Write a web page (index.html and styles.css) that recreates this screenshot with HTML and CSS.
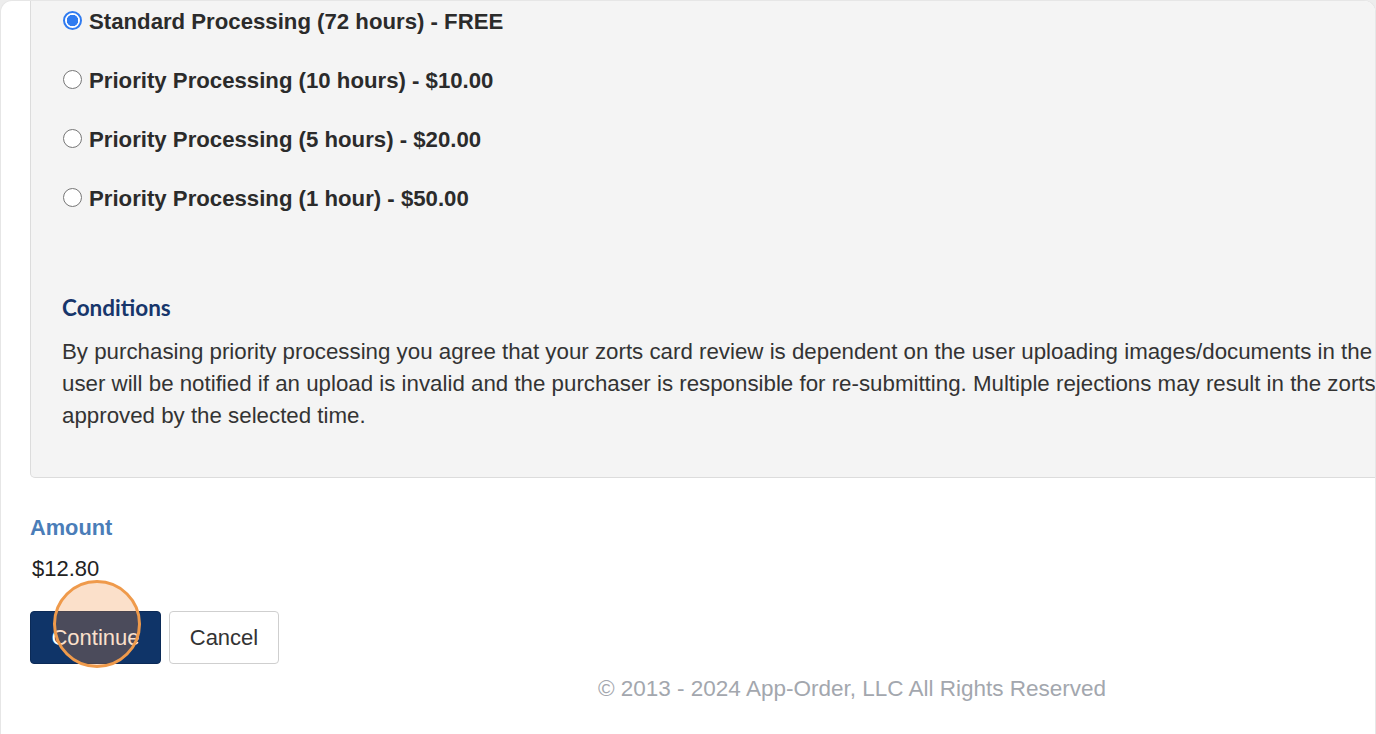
FILE: index.html
```html
<!DOCTYPE html>
<html lang="en">
<head>
<meta charset="utf-8">
<title>Processing options</title>
<link rel="stylesheet" href="styles.css">
</head>
<body>
<div class="frame">
  <div class="content">
    <section class="panel">
      <div class="options">
        <label class="option"><input type="radio" name="speed" checked> <span>Standard Processing (72 hours) - FREE</span></label>
        <label class="option"><input type="radio" name="speed"> <span>Priority Processing (10 hours) - $10.00</span></label>
        <label class="option"><input type="radio" name="speed"> <span>Priority Processing (5 hours) - $20.00</span></label>
        <label class="option"><input type="radio" name="speed"> <span>Priority Processing (1 hour) - $50.00</span></label>
      </div>
      <h3 class="cond-title">Conditions</h3>
      <p class="cond-text"><span class="line">By purchasing priority processing you agree that your zorts card review is dependent on the user uploading images/documents in the allotted time. The</span><span class="line">user will be notified if an upload is invalid and the purchaser is responsible for re-submitting. Multiple rejections may result in the zorts card not being</span><span class="line">approved by the selected time.</span></p>
    </section>
    <h4 class="amount-label">Amount</h4>
    <div class="amount">$12.80</div>
    <div class="actions">
      <button class="btn btn-primary" type="button">Continue</button>
      <button class="btn btn-default" type="button">Cancel</button>
      <span class="click-marker"></span>
    </div>
    <footer class="footer">© 2013 - 2024 App-Order, LLC All Rights Reserved</footer>
  </div>
</div>
</body>
</html>
```
FILE: styles.css
```css
html, body {
  margin: 0;
  padding: 0;
  background: #ededed;
}
body {
  font-family: "Liberation Sans", Arial, Helvetica, sans-serif;
  color: #333;
}
.frame {
  width: 1376px;
  height: 734px;
  box-sizing: border-box;
  background: #fff;
  border-radius: 12px 12px 0 0;
  border: 1px solid #e6e6e6;
  border-bottom: none;
  overflow: hidden;
  padding-left: 29px;
}
.content {
  width: 1644px;
}
.panel {
  background: #f4f4f4;
  border: 1px solid #dcdcdc;
  border-top: none;
  border-radius: 0 0 5px 5px;
  padding: 0 31px 45px 31px;
}
.options {
  display: flex;
  flex-direction: column;
  gap: 17px;
}
.option {
  display: flex;
  align-items: center;
  height: 42px;
  font-size: 22.2px;
  font-weight: bold;
  color: #2b2b2b;
}
.option input {
  appearance: none;
  -webkit-appearance: none;
  width: 19px;
  height: 19px;
  margin: 0 7px 0 1px;
  border: 1px solid #767676;
  border-radius: 50%;
  background: #fff;
  box-sizing: border-box;
  position: relative;
  top: -2px;
}
.option input:checked {
  border: 2px solid #2f7bf0;
  background: radial-gradient(circle, #2f7bf0 0 5.5px, #fff 6px);
}
.cond-title {
  margin: 74px 0 0 0;
  font-family: Lato, "Open Sans", sans-serif;
  font-weight: bold;
  font-size: 22.5px;
  line-height: 28px;
  color: #17366b;
}
.cond-text {
  margin: 14px 0 0 0;
  font-size: 22.3px;
  line-height: 32px;
  color: #333;
  white-space: nowrap;
}
.cond-text .line {
  display: block;
}
.amount-label {
  margin: 36px 0 0 0;
  font-size: 21.8px;
  line-height: 28px;
  font-weight: bold;
  color: #4a7db8;
}
.amount {
  margin-top: 13px;
  padding-left: 2px;
  font-size: 22px;
  line-height: 28px;
  color: #222;
}
.actions {
  position: relative;
  display: flex;
  gap: 8px;
  margin-top: 28px;
}
.btn {
  height: 53px;
  box-sizing: border-box;
  border-radius: 4px;
  font-family: "Liberation Sans", Arial, sans-serif;
  font-size: 22px;
  padding: 0;
  cursor: pointer;
}
.btn-primary {
  width: 131px;
  background: #0f3468;
  border: 1px solid #0b2a57;
  color: #fff;
}
.btn-default {
  width: 110px;
  background: #fff;
  border: 1px solid #cfcfcf;
  color: #333;
}
.click-marker {
  position: absolute;
  left: 23px;
  top: -31px;
  width: 88px;
  height: 88px;
  box-sizing: border-box;
  border-radius: 50%;
  border: 3px solid #ef9a4b;
  background: rgba(240, 140, 60, 0.27);
  pointer-events: none;
}
.footer {
  margin-top: 11px;
  text-align: center;
  font-size: 22.5px;
  line-height: 28px;
  color: #a3a7ae;
}
```
